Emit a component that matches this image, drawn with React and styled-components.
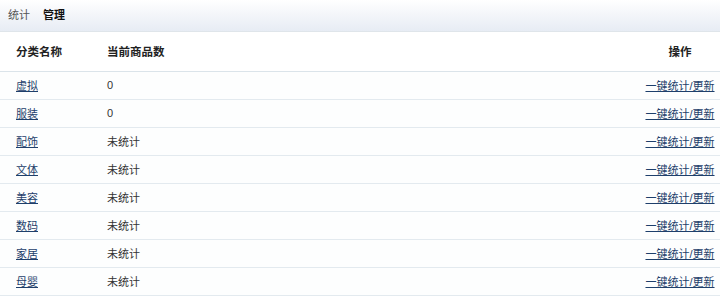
import React from 'react';
import styled, { createGlobalStyle } from 'styled-components';

const rows = [
	{ name: '虚拟', count: '0' },
	{ name: '服装', count: '0' },
	{ name: '配饰', count: '未统计' },
	{ name: '文体', count: '未统计' },
	{ name: '美容', count: '未统计' },
	{ name: '数码', count: '未统计' },
	{ name: '家居', count: '未统计' },
	{ name: '母婴', count: '未统计' },
];

const App = () => {
	return (
		<>
			<GlobalStyle />
			<Page>
				<TabBar>
					<Tab>统计</Tab>
					<Tab active>管理</Tab>
				</TabBar>
				<Table>
					<thead>
						<tr>
							<Th width='107px' first>分类名称</Th>
							<Th>当前商品数</Th>
							<Th center width='80px'>操作</Th>
						</tr>
					</thead>
					<tbody>
						{rows.map((row) => (
							<Row key={row.name}>
								<Td first>
									<NameLink href='#'>{row.name}</NameLink>
								</Td>
								<Td>{row.count}</Td>
								<Td center>
									<NameLink href='#'>一键统计/更新</NameLink>
								</Td>
							</Row>
						))}
					</tbody>
				</Table>
			</Page>
		</>
	);
};

const GlobalStyle = createGlobalStyle`
	body {
		margin: 0;
		background: #ffffff;
		font-family: "Liberation Sans", "Noto Sans CJK SC", sans-serif;
		font-size: 11px;
		color: #333333;
	}
`;

const Page = styled.div`
	width: 720px;
	height: 299px;
	overflow: hidden;
`;

const TabBar = styled.div`
	height: 32px;
	box-sizing: border-box;
	border-bottom: 1px solid #dfe5ea;
	background: linear-gradient(to bottom, #ffffff 0%, #f4f6fa 45%, #e7ecf4 100%);
	display: flex;
	align-items: center;
	gap: 13px;
	padding: 0 0 3px 8px;
`;

const Tab = styled.span`
	font-size: 11px;
	color: ${(p) => (p.active ? '#111111' : '#555555')};
	font-weight: ${(p) => (p.active ? 'bold' : 'normal')};
`;

const Table = styled.table`
	width: 100%;
	border-collapse: collapse;
	table-layout: fixed;
`;

const Th = styled.th`
	box-sizing: border-box;
	height: 39px;
	width: ${(p) => p.width || 'auto'};
	padding: 0 0 0 ${(p) => (p.first ? '16px' : '0')};
	text-align: ${(p) => (p.center ? 'center' : 'left')};
	font-size: 11.5px;
	font-weight: bold;
	color: #222222;
	border-bottom: 1px solid #dbe4ea;
`;

const Row = styled.tr`
	background: #fdfefe;
`;

const Td = styled.td`
	height: 27px;
	padding: 0 0 0 ${(p) => (p.first ? '16px' : '0')};
	text-align: ${(p) => (p.center ? 'center' : 'left')};
	color: #333333;
	border-bottom: 1px solid #e3eaef;
`;

const NameLink = styled.a`
	color: #1e3f6b;
	text-decoration: underline;
`;

export default App;
